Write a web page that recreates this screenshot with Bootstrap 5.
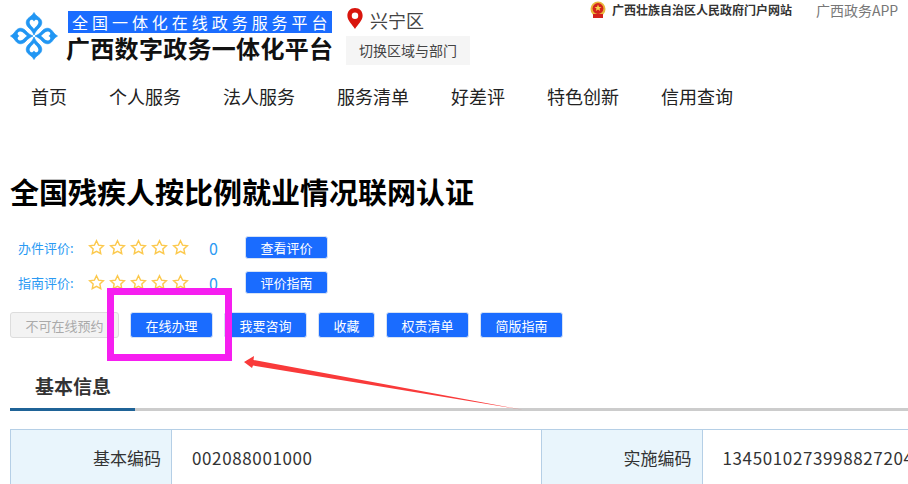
<!DOCTYPE html>
<html lang="zh-CN">
<head>
    <meta charset="UTF-8">
    <meta name="viewport" content="width=device-width, initial-scale=1.0">
    <title>全国残疾人按比例就业情况联网认证</title>
    <link href="https://cdn.jsdelivr.net/npm/bootstrap@5.3.0/dist/css/bootstrap.min.css" rel="stylesheet">
    <style>
        html, body { height: 484px; overflow: hidden; }
        body { font-family: "Noto Sans CJK SC", sans-serif; color: #333; background: #fff; position: relative; }
        .site-head { height: 75px; padding-left: 10px; position: relative; }
        .logo-box { width: 48px; height: 48px; margin-top: 12px; margin-right: 8px; }
        .brand-box { width: 269px; margin-top: 11px; }
        .brand-sub { width: 264px; height: 22px; margin-left: 2px; background: #1a6cff; color: #fff; font-size: 16px; line-height: 22px; letter-spacing: 3.96px; padding-left: 4px; white-space: nowrap; overflow: hidden; }
        .brand-name { font-size: 24px; line-height: 30px; font-weight: 700; color: #111; letter-spacing: 0.3px; white-space: nowrap; }
        .area-box { margin-left: 11px; width: 130px; }
        .area-name { font-size: 18px; line-height: 24px; margin-top: 8px; height: 28px; color: #444; gap: 6px; }
        .area-btn { width: 124px; height: 29px; background: #f5f5f5; font-size: 14px; line-height: 29px; text-align: center; color: #444; }
        .top-links { position: absolute; top: 0; left: 590px; width: 318px; height: 20px; }
        .gov-link { font-size: 12px; font-weight: 700; color: #333; margin-left: 6px; width: 204px; white-space: nowrap; }
        .app-link { font-size: 14px; color: #777; white-space: nowrap; }
        .main-nav { padding-left: 31px; gap: 42px; height: 42px; }
        .main-nav a { font-size: 18px; line-height: 42px; color: #222; text-decoration: none; white-space: nowrap; }
        .page-title { font-size: 29px; line-height: 40px; font-weight: 700; color: #000; margin: 54px 0 0 10px; white-space: nowrap; }
        .rate-row { height: 23px; padding-left: 18px; align-items: center; color: #2b9af3; font-size: 13px; }
        .rate-first { margin-top: 25px; }
        .rate-second { margin-top: 12px; }
        .rate-label { width: 70px; white-space: nowrap; }
        .rate-stars { width: 121px; gap: 4px; }
        .rate-num { width: 36px; font-size: 16px; }
        .btn-blue { background: #1a6cff; border: 1px solid #d6e2f5; color: #fff; font-size: 13px; border-radius: 3px; padding: 0; height: 100%; line-height: 1; width: 83px; }
        .btn-blue:hover { background: #1a6cff; color: #fff; }
        .action-row { height: 26px; margin-top: 18px; padding-left: 10px; gap: 11px; }
        .action-row .btn-blue.btn-short { width: 57px; }
        .btn-off { --bs-btn-disabled-color: #aaa; --bs-btn-disabled-bg: #f3f3f3; --bs-btn-disabled-border-color: #ddd; --bs-btn-disabled-opacity: 1; width: 109px; height: 100%; padding: 0; font-size: 13px; line-height: 1; border-radius: 3px; }
        .tab-bar { margin: 31px 0 0 10px; height: 42px; border-bottom: 3px solid #ccc; }
        .tab-on { width: 125px; height: 42px; padding-left: 25px; font-size: 19px; line-height: 34px; font-weight: 700; color: #333; border-bottom: 3px solid #1f6397; }
        .info-wrap { margin: 18px 0 0 10px; width: 898px; overflow: hidden; }
        .info-table { table-layout: fixed; width: 1062px; margin: 0; border-color: #b5cfe6; font-size: 17px; }
        .info-table th, .info-table td { height: 56px; padding: 0 20px; vertical-align: middle; font-weight: 400; color: #333; white-space: nowrap; overflow: hidden; }
        .info-table td { letter-spacing: 0.62px; }
        .info-table th { width: 161px; text-align: right; padding-right: 10px; background: #e9f5fc; --bs-table-bg: #e9f5fc; }
        .mark-box { position: absolute; left: 107px; top: 288px; width: 125px; height: 73px; border: 7px solid #f61ef0; }
        .mark-arrow { position: absolute; left: 240px; top: 355px; }
    </style>
</head>
<body>
    <header class="site-head d-flex">
        <div class="logo-box">
            <svg width="48" height="48" viewBox="-24 -24 48 48">
                <defs>
                    <g id="petal">
                        <path fill="#2196f3" stroke="#2196f3" stroke-width="0.7" d="M0,-1 C-1,-4 -3,-6 -5,-8 C-8.5,-11 -8.5,-15 -6,-17.5 C-4,-19.5 -2,-20 0,-23.5 C2,-20 4,-19.5 6,-17.5 C8.5,-15 8.5,-11 5,-8 C3,-6 1,-4 0,-1Z"/>
                        <path fill="#fff" d="M0,-7 C-1.5,-9.5 -4.6,-11 -4.4,-14 C-4,-17 -1,-17 0,-14.5 C1,-17 4,-17 4.4,-14 C4.6,-11 1.5,-9.5 0,-7Z"/>
                    </g>
                </defs>
                <use href="#petal"/>
                <use href="#petal" transform="rotate(90)"/>
                <use href="#petal" transform="rotate(180)"/>
                <use href="#petal" transform="rotate(270)"/>
                <circle r="1" fill="#fff"/>
            </svg>
        </div>
        <div class="brand-box">
            <div class="brand-sub">全国一体化在线政务服务平台</div>
            <div class="brand-name">广西数字政务一体化平台</div>
        </div>
        <div class="area-box">
            <div class="area-name d-flex align-items-start">
                <svg width="18" height="21" viewBox="0 0 18 22"><path fill="#d9150d" fill-rule="evenodd" d="M9,0 C4,0 1,3.6 1,8 C1,13 6,17 9,22 C12,17 17,13 17,8 C17,3.6 14,0 9,0Z M9,4.6 A3.4,3.4 0 1 1 9,11.4 A3.4,3.4 0 1 1 9,4.6Z"/></svg>
                <span>兴宁区</span>
            </div>
            <div class="area-btn">切换区域与部门</div>
        </div>
        <div class="top-links d-flex align-items-center">
            <svg width="16" height="18" viewBox="0 0 16 18">
                <circle cx="8" cy="8" r="7.5" fill="#e8b73c"/>
                <circle cx="8" cy="7.5" r="5.4" fill="#d3231c"/>
                <path fill="#f4d24b" d="M8,3.5 L9,6 L11.5,6 L9.5,7.5 L10.2,10 L8,8.6 L5.8,10 L6.5,7.5 L4.5,6 L7,6Z"/>
                <rect x="3" y="13" width="10" height="4" fill="#d3231c"/>
            </svg>
            <span class="gov-link">广西壮族自治区人民政府门户网站</span>
            <span class="app-link">广西政务APP</span>
        </div>
    </header>

    <nav class="main-nav d-flex">
        <a href="#">首页</a>
        <a href="#">个人服务</a>
        <a href="#">法人服务</a>
        <a href="#">服务清单</a>
        <a href="#">好差评</a>
        <a href="#">特色创新</a>
        <a href="#">信用查询</a>
    </nav>

    <h1 class="page-title">全国残疾人按比例就业情况联网认证</h1>

    <div class="rate-row rate-first d-flex">
        <span class="rate-label">办件评价:</span>
        <span class="rate-stars d-flex"></span>
        <span class="rate-num">0</span>
        <button class="btn btn-blue" type="button">查看评价</button>
    </div>
    <div class="rate-row rate-second d-flex">
        <span class="rate-label">指南评价:</span>
        <span class="rate-stars d-flex"></span>
        <span class="rate-num">0</span>
        <button class="btn btn-blue" type="button">评价指南</button>
    </div>

    <div class="action-row d-flex">
        <button class="btn btn-off" type="button" disabled>不可在线预约</button>
        <button class="btn btn-blue" type="button">在线办理</button>
        <button class="btn btn-blue" type="button">我要咨询</button>
        <button class="btn btn-blue btn-short" type="button">收藏</button>
        <button class="btn btn-blue" type="button">权责清单</button>
        <button class="btn btn-blue" type="button">简版指南</button>
    </div>

    <div class="tab-bar">
        <div class="tab-on">基本信息</div>
    </div>

    <div class="info-wrap">
        <table class="table table-bordered info-table">
            <tr>
                <th>基本编码</th>
                <td>002088001000</td>
                <th>实施编码</th>
                <td>134501027399882720400</td>
            </tr>
        </table>
    </div>

    <div class="mark-box"></div>
    <svg class="mark-arrow" width="290" height="60" viewBox="0 0 290 60">
        <path fill="#f93a3a" d="M4,7 L14,1 L13.5,5 L284,55 L13,10.5 L12,13Z"/>
    </svg>

    <script>
        const star = '<svg width="17" height="17" viewBox="0 0 24 24"><path fill="#fff" stroke="#fcc94d" stroke-width="2" d="M12 2.5l2.9 6.2 6.8.8-5 4.6 1.3 6.7-6-3.3-6 3.3 1.3-6.7-5-4.6 6.8-.8z"/></svg>';
        document.querySelectorAll('.rate-stars').forEach((el) => { el.innerHTML = star.repeat(5); });
    </script>
    <script src="https://cdn.jsdelivr.net/npm/bootstrap@5.3.0/dist/js/bootstrap.bundle.min.js"></script>
</body>
</html>
